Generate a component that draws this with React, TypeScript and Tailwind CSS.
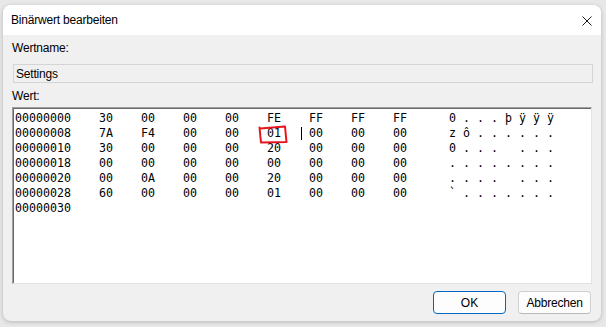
const rows: { offset: string; bytes: string[] }[] = [
  { offset: '00000000', bytes: ['30', '00', '00', '00', 'FE', 'FF', 'FF', 'FF'] },
  { offset: '00000008', bytes: ['7A', 'F4', '00', '00', '01', '00', '00', '00'] },
  { offset: '00000010', bytes: ['30', '00', '00', '00', '20', '00', '00', '00'] },
  { offset: '00000018', bytes: ['00', '00', '00', '00', '00', '00', '00', '00'] },
  { offset: '00000020', bytes: ['00', '0A', '00', '00', '20', '00', '00', '00'] },
  { offset: '00000028', bytes: ['60', '00', '00', '00', '01', '00', '00', '00'] },
];

function toChar(hex: string) {
  const code = parseInt(hex, 16);
  if (code === 0x20) return ' ';
  if (code < 0x20) return '.';
  return String.fromCharCode(code);
}

function lineOf(offset: string, bytes: string[]) {
  const ascii = bytes.map(toChar).join(' ');
  return `${offset}    ${bytes.join('    ')}      ${ascii}`;
}

export default function App() {
  return (
    <div
      className="w-[606px] h-[327px] bg-[#e8e8e8] pt-[5px] pl-[3px] pr-[5px] pb-[6px]"
      style={{ fontFamily: '"Liberation Sans", Arial, sans-serif' }}
    >
      <div className="w-full h-full rounded-[8px] overflow-hidden bg-[#f0f0f0] shadow-[0_1px_4px_rgba(0,0,0,0.22)] flex flex-col">
        {/* Title bar */}
        <div className="h-[30px] bg-white flex items-center justify-between pl-[8px] pr-[9px] shrink-0">
          <span className="text-[12px] text-black tracking-[-0.2px]">Binärwert bearbeiten</span>
          <svg width="10" height="10" viewBox="0 0 10 10" className="mt-[1px]">
            <path d="M0.5 0.5 L9.5 9.5 M9.5 0.5 L0.5 9.5" stroke="#1a1a1a" strokeWidth="1" />
          </svg>
        </div>

        {/* Body */}
        <div className="flex-1 flex flex-col px-[9px] pt-[5px] pb-[8px]">
          <div className="h-[16px] leading-[16px] text-[12px] text-black tracking-[-0.2px]">Wertname:</div>
          <div className="mt-[8px] ml-[1px] mr-[-1px] h-[19px] border border-[#d4d4d4] bg-[#f0f0f0] flex items-center pl-[2px] text-[12px] text-black tracking-[-0.2px]">
            Settings
          </div>
          <div className="mt-[5px] h-[16px] leading-[16px] text-[12px] text-black tracking-[-0.2px]">Wert:</div>

          {/* Hex editor */}
          <div className="relative mt-[3px] h-[177px] bg-white border-t border-l border-[#a0a0a0] border-r border-b border-r-[#e3e3e3] border-b-[#e3e3e3] shadow-[inset_1px_1px_0_#696969] pt-[3px] pl-[2px]">
            <div
              className="text-[11.63px] leading-[15px] text-black whitespace-pre"
              style={{ fontFamily: '"DejaVu Sans Mono", "Liberation Mono", monospace' }}
            >
              {rows.map((r) => (
                <div key={r.offset}>{lineOf(r.offset, r.bytes)}</div>
              ))}
              <div>00000030</div>
            </div>

            {/* caret */}
            <div className="absolute left-[288px] top-[19px] w-[1px] h-[13px] bg-black" />

            {/* red annotation around 01 */}
            <svg className="absolute left-[245px] top-[17px]" width="30" height="19" viewBox="0 0 30 19" fill="none">
              <path
                d="M2 3.5 L27 1.5 L28.5 17 L3 17.5 L1.5 2.5"
                stroke="#e8141b"
                strokeWidth="2"
                strokeLinejoin="round"
                strokeLinecap="round"
              />
            </svg>
          </div>

          {/* Buttons */}
          <div className="mt-[7px] flex justify-end gap-[12px] pr-[1px]">
            <button className="w-[73px] h-[23px] rounded-[4px] border border-[#0067c0] bg-[#fdfdfd] text-[12px] text-black shadow-[inset_0_0_0_1px_#ffffff]">
              OK
            </button>
            <button className="w-[73px] h-[23px] rounded-[4px] border border-[#d0d0d0] border-b-[#b8b8b8] bg-[#fdfdfd] text-[12px] text-black tracking-[-0.2px]">
              Abbrechen
            </button>
          </div>
        </div>
      </div>
    </div>
  );
}
